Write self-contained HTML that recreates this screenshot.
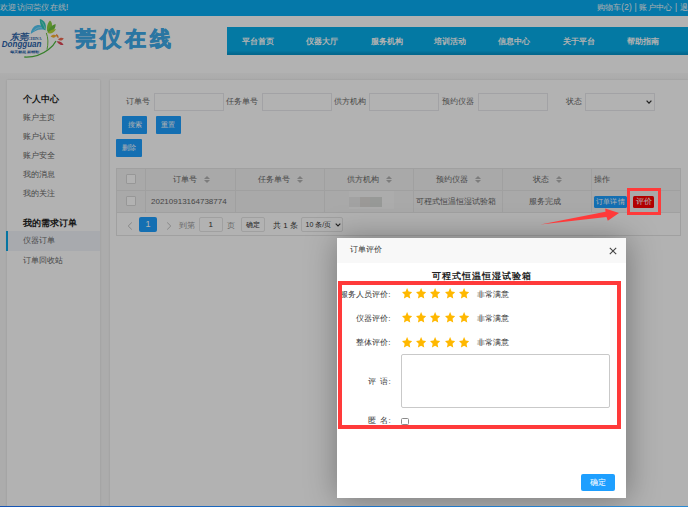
<!DOCTYPE html>
<html><head><meta charset="utf-8">
<style>
*{margin:0;padding:0;box-sizing:border-box}
html,body{width:688px;height:507px;overflow:hidden}
body{position:relative;background:#f6f6f6;font-family:"Liberation Sans",sans-serif;color:#333}
.a{position:absolute;white-space:nowrap}
#topbar{left:0;top:0;width:688px;height:16px;background:#08adf2;color:#f4f8fb;font-size:8.2px;line-height:13px;letter-spacing:.25px}
#header{left:0;top:16px;width:688px;height:57px;background:#fff}
#nav{left:226.5px;top:27.3px;width:462px;height:28px;background:linear-gradient(#06aeea 0,#06aeea 84%,#0596cc 96%,#0596cc 100%)}
.navi{color:#fff;font-size:8px;font-weight:bold;top:8.7px;margin-left:.5px}
#grad{left:0;top:73px;width:688px;height:7px;background:linear-gradient(#f9f9f9,#f6f6f6)}
#side{left:7px;top:80px;width:93px;height:427px;background:#fff;box-shadow:0 0 2px rgba(0,0,0,.12)}
.si{font-size:8px;color:#666;left:16px}
.sh{font-size:9px;color:#222;font-weight:bold;left:16px}
#main{left:110px;top:80px;width:578px;height:427px;background:#fff;box-shadow:0 0 2px rgba(0,0,0,.12)}
.lbl{font-size:8px;color:#666}
.inp{border:1px solid #e8e9ec;background:#fff;height:17.6px}
.btn{background:#1e9fff;color:#fff;font-size:7px;text-align:center;border-radius:1px}
.cb{width:10px;height:10px;border:1px solid #d8d8d8;background:#fff;border-radius:1px}
.th,.td{font-size:8px;color:#666;line-height:10px}
.pg{font-size:8px;color:#666}
.srt{display:inline-block;width:6px;height:8px;vertical-align:middle;margin-left:5px;position:relative;top:0px;background:conic-gradient(from 0deg at 50% 0%,#0000 0)}
.srt:before{content:"";position:absolute;left:0;top:0;border:3px solid transparent;border-top-width:0;border-bottom:3px solid #b2b2b2}
.srt:after{content:"";position:absolute;left:0;top:4.5px;border:3px solid transparent;border-bottom-width:0;border-top:3px solid #b2b2b2}
#overlay{left:0;top:0;width:688px;height:507px;background:rgba(0,0,0,.3)}
.ml{font-size:8px;color:#333;line-height:10px}
#modal{left:337px;top:238px;width:289px;height:260px;background:#fff;box-shadow:1px 1px 30px rgba(0,0,0,.35)}
</style></head><body>
<div class="a" id="topbar"><span class="a" style="left:0px;top:0.6px">欢迎访问莞仪在线!</span><span class="a" style="left:596.5px;top:0.6px">购物车(2) | 账户中心 | 退出</span></div>
<div class="a" id="header">
 <svg class="a" style="left:0;top:-16px" width="70" height="74" viewBox="0 0 70 74">
  <path d="M30.7 34 C31.5 29 33.5 26 37.6 25.1 C40.5 24.6 43.2 26.5 44.8 30 C41.5 29.2 38.5 29.6 35.5 31 C33.5 32 32 33 30.7 34Z" fill="#52c8f5"/>
  <path d="M33.5 31.2 C35.5 28.5 38.5 27.2 42 27.8" stroke="#d8f2fb" stroke-width=".5" fill="none"/>
  <path d="M39.8 19 C42.8 19.8 45.4 22 45.8 25.5 C46 27.5 45.7 29 45.4 30.5 C43 29 40.8 26.5 40.3 24 C40 22.3 39.8 20.5 39.8 19Z" fill="#30c8b8"/>
  <path d="M41.5 21.5 C43 23.5 44.3 26 45 29" stroke="#c8f0ea" stroke-width=".5" fill="none"/>
  <path d="M50 20.6 C52 22 52.6 25 51.5 28 C50.5 30 48.8 31.5 47.2 31.5 C46.6 28.5 47 25.5 48 23.5 C48.6 22.2 49.2 21.3 50 20.6Z" fill="#88d040"/>
  <path d="M55.6 24 C55.8 27 54.5 29.5 52.5 31 C51 32 49 32.5 47.5 32.5 C48.5 29.5 50 27.2 52 25.8 C53.2 25 54.4 24.4 55.6 24Z" fill="#6cc040"/>
  <path d="M56 29 C54.8 31.5 52.8 33 50.5 33.4 C49.5 33.6 48.5 33.4 47.5 33 C49 31.2 51 30 53 29.5 C54 29.2 55 29 56 29Z" fill="#b8d838"/>
  <path d="M46.3 32.9 C48.2 37.5 48.4 44 47 49.5" stroke="#6cc040" stroke-width="1" fill="none"/>
  <path d="M24.3 57 C33 57.5 42 54.5 48.5 49.5 C52 46.8 54.5 44 56 41" stroke="#50b840" stroke-width="1.3" fill="none"/>
  <path d="M50.6 36.5 C52 34.6 54.5 34.2 56.5 35.5 C55.5 37.5 53.5 38.6 50.6 36.5Z" fill="#f8b030"/>
  <path d="M56 34 C57.8 34.2 58.8 35.8 58.5 38.2 C56.8 37.5 55.8 36 56 34Z" fill="#f89040"/>
  <path d="M58 39.5 C59.5 37.6 62 37.2 63.8 38.4 C62.5 40.5 60.2 41.2 58 39.5Z" fill="#f06850"/>
  <path d="M56.8 41.2 C59.5 40.8 62.5 42 63.6 45 C60.8 45.5 58.2 44 56.8 41.2Z" fill="#e04858"/>
  <text x="9.8" y="39.6" font-size="9" font-weight="bold" font-style="italic" fill="#2a62a8" textLength="18" lengthAdjust="spacingAndGlyphs">东莞</text>
  <text x="27.7" y="39.5" font-size="4" font-weight="bold" fill="#2a62a8" font-family="Liberation Serif" textLength="13.8" lengthAdjust="spacingAndGlyphs">CHINA</text>
  <text x="1.8" y="46.8" font-size="9" font-weight="bold" font-style="italic" fill="#2a62a8" textLength="39.7" lengthAdjust="spacingAndGlyphs">Dongguan</text>
  <text x="9.5" y="53" font-size="3.2" font-weight="bold" fill="#2a62a8" textLength="30" lengthAdjust="spacingAndGlyphs">每天都是新精彩</text>
 </svg>
 <span class="a" style="left:74.5px;top:10px;font-size:21px;font-weight:900;color:#3eaae8;letter-spacing:4px;line-height:26px;-webkit-text-stroke:0.7px #3eaae8">莞仪在线</span>
</div>
<div class="a" id="nav">
 <span class="a navi" style="left:15px">平台首页</span>
 <span class="a navi" style="left:79px">仪器大厅</span>
 <span class="a navi" style="left:144px">服务机构</span>
 <span class="a navi" style="left:207px">培训活动</span>
 <span class="a navi" style="left:271px">信息中心</span>
 <span class="a navi" style="left:336px">关于平台</span>
 <span class="a navi" style="left:400px">帮助指南</span>
</div>
<div class="a" id="grad"></div>
<div class="a" id="side">
 <span class="a sh" style="top:12.8px">个人中心</span>
 <span class="a si" style="top:32px">账户主页</span>
 <span class="a si" style="top:51px">账户认证</span>
 <span class="a si" style="top:70px">账户安全</span>
 <span class="a si" style="top:89px">我的消息</span>
 <span class="a si" style="top:108px">我的关注</span>
 <span class="a sh" style="top:136.8px">我的需求订单</span>
 <div class="a" style="left:-1px;top:151px;width:94px;height:19.6px;background:#f1f4fa;border-left:2px solid #0aa8e8"></div>
 <span class="a si" style="top:155px">仪器订单</span>
 <span class="a si" style="top:175px">订单回收站</span>
</div>
<div class="a" id="main">
 <span class="a lbl" style="left:16px;top:16px">订单号</span>
 <div class="a inp" style="left:44px;top:13px;width:70px"></div>
 <span class="a lbl" style="left:116px;top:16px">任务单号</span>
 <div class="a inp" style="left:152px;top:13px;width:70px"></div>
 <span class="a lbl" style="left:224px;top:16px">供方机构</span>
 <div class="a inp" style="left:259px;top:13px;width:70px"></div>
 <span class="a lbl" style="left:332px;top:16px">预约仪器</span>
 <div class="a inp" style="left:368px;top:13px;width:70px"></div>
 <span class="a lbl" style="left:456px;top:16px">状态</span>
 <div class="a inp" style="left:475px;top:13px;width:70px"><svg class="a" style="left:60.2px;top:6.2px" width="6" height="4" viewBox="0 0 6 4"><path d="M.6 .6 L3 3.1 L5.4 .6" stroke="#333" stroke-width="1.3" fill="none"/></svg></div>
 <div class="a btn" style="left:12px;top:36px;width:25px;height:17.5px;line-height:17px">搜索</div>
 <div class="a btn" style="left:45.5px;top:36px;width:25.5px;height:17.5px;line-height:17px">重置</div>
 <div class="a btn" style="left:6px;top:59px;width:26px;height:17.5px;line-height:17px">删除</div>
 <div class="a" id="tbl" style="left:6px;top:88px;width:565px;height:68px;border:1px solid #e6e6e6;border-bottom:1px solid #e6e6e6">
  <div class="a" style="left:0;top:0;width:563px;height:43px;background:#f2f2f2"></div>
  <div class="a" style="left:0;top:21px;width:563px;height:1px;background:#e6e6e6"></div>
  <div class="a" style="left:0;top:43px;width:563px;height:1px;background:#e6e6e6"></div>
  <div class="a" style="left:28px;top:0;width:1px;height:43px;background:#e6e6e6"></div>
  <div class="a" style="left:117.5px;top:0;width:1px;height:43px;background:#e6e6e6"></div>
  <div class="a" style="left:206.5px;top:0;width:1px;height:43px;background:#e6e6e6"></div>
  <div class="a" style="left:295.5px;top:0;width:1px;height:43px;background:#e6e6e6"></div>
  <div class="a" style="left:384.5px;top:0;width:1px;height:43px;background:#e6e6e6"></div>
  <div class="a" style="left:473.8px;top:0;width:1px;height:43px;background:#e6e6e6"></div>
  <div class="a cb" style="left:8.5px;top:5.4px"></div>
  <div class="a cb" style="left:8.5px;top:27.3px"></div>
  <span class="a th" style="left:56px;top:6px">订单号 <i class="srt"></i></span>
  <span class="a th" style="left:141px;top:6px">任务单号 <i class="srt"></i></span>
  <span class="a th" style="left:230px;top:6px">供方机构 <i class="srt"></i></span>
  <span class="a th" style="left:319px;top:6px">预约仪器 <i class="srt"></i></span>
  <span class="a th" style="left:416px;top:6px">状态 <i class="srt"></i></span>
  <span class="a th" style="left:477px;top:6px">操作</span>
  <span class="a td" style="left:34px;top:28px">20210913164738774</span>
  <div class="a" style="left:232px;top:22px;width:45px;height:18px;background:#f6f6f6"></div>
  <div class="a" style="left:231.5px;top:27.5px;width:11px;height:10.3px;background:#e9e9e9"></div>
  <div class="a" style="left:242.5px;top:27.5px;width:10.5px;height:10.3px;background:#dfdcd9"></div>
  <div class="a" style="left:253px;top:27.5px;width:11.5px;height:10.3px;background:#d8dcd9"></div>
  <span class="a td" style="left:299px;top:28px">可程式恒温恒湿试验箱</span>
  <span class="a td" style="left:412px;top:28px">服务完成</span>
  <div class="a" style="left:477px;top:26.5px;width:33px;height:12.3px;background:#1e9fff;color:#fff;font-size:7px;line-height:12.3px;text-align:center;border-radius:1.5px;letter-spacing:.3px">订单详情</div>
  <div class="a" style="left:516px;top:26.5px;width:21px;height:12.5px;background:#f00;color:#fff;font-size:8px;line-height:12.5px;text-align:center;border-radius:1.5px;letter-spacing:.5px;padding-left:1.6px;line-height:12px">评价</div>
  <svg class="a" style="left:9.5px;top:53px" width="6" height="8" viewBox="0 0 6 8"><path d="M4.8 .5 L1.2 4 L4.8 7.5" stroke="#c2c2c2" stroke-width="1" fill="none"/></svg>
  <div class="a" style="left:22px;top:48.1px;width:18px;height:15px;background:#1e9fff;color:#fff;font-size:9px;line-height:15px;text-align:center;border-radius:2px">1</div>
  <svg class="a" style="left:48.5px;top:53px" width="6" height="8" viewBox="0 0 6 8"><path d="M1.2 .5 L4.8 4 L1.2 7.5" stroke="#c2c2c2" stroke-width="1" fill="none"/></svg>
  <span class="a pg" style="left:62px;top:50.8px;color:#999">到第</span>
  <div class="a" style="left:82px;top:48.1px;width:23.5px;height:15px;border:1px solid #e6e6e6;border-radius:2px;font-size:8px;line-height:13px;text-align:center;color:#333">1</div>
  <span class="a pg" style="left:110px;top:50.8px;color:#999">页</span>
  <div class="a" style="left:124px;top:48.1px;width:24px;height:15px;border:1px solid #e6e6e6;border-radius:2px;font-size:7px;line-height:13px;text-align:center;color:#333">确定</div>
  <span class="a pg" style="left:156px;top:50.8px;color:#333">共 1 条</span>
  <div class="a" style="left:184px;top:48.1px;width:42px;height:15px;border:1px solid #e6e6e6;border-radius:2px;font-size:7px;line-height:13px;padding-left:3.5px;color:#333">10 条/页<svg class="a" style="left:32.5px;top:5px" width="6" height="4" viewBox="0 0 6 4"><path d="M.7 .7 L3 3 L5.3 .7" stroke="#333" stroke-width="1.1" fill="none"/></svg></div>
 </div>
</div>
<div class="a" id="overlay"></div>
<div class="a" id="modal">
 <div class="a" style="left:0;top:0;width:289px;height:25px;background:#f8f8f8"></div>
 <span class="a" style="left:12.5px;top:7px;font-size:8px;color:#333;line-height:10px">订单评价</span>
 <svg class="a" style="left:272px;top:9px" width="8" height="8" viewBox="0 0 8 8"><path d="M.8 .8 L7.2 7.2 M7.2 .8 L.8 7.2" stroke="#444" stroke-width="1.1"/></svg>
 <div class="a" style="left:0;width:289px;text-align:center;top:31.7px;font-size:9px;font-weight:bold;color:#222;line-height:12px;letter-spacing:.95px;padding-left:.95px">可程式恒温恒湿试验箱</div>
 <span class="a ml" style="right:235.5px;top:52px">服务人员评价:</span>
 <span class="a ml" style="right:235.5px;top:75.6px">仪器评价:</span>
 <span class="a ml" style="right:235.5px;top:99.5px">整体评价:</span>
 <svg class="a" style="left:64.8px;top:50.2px" width="10.4" height="11" viewBox="0 0 10.4 11"><path d="M5.10 -0.04 L6.60 3.60 L10.24 4.03 L7.53 6.71 L8.27 10.61 L5.10 8.63 L1.93 10.61 L2.67 6.71 L-0.04 4.03 L3.60 3.60Z" fill="#FFB800"/></svg><svg class="a" style="left:79.1px;top:50.2px" width="10.4" height="11" viewBox="0 0 10.4 11"><path d="M5.10 -0.04 L6.60 3.60 L10.24 4.03 L7.53 6.71 L8.27 10.61 L5.10 8.63 L1.93 10.61 L2.67 6.71 L-0.04 4.03 L3.60 3.60Z" fill="#FFB800"/></svg><svg class="a" style="left:93.4px;top:50.2px" width="10.4" height="11" viewBox="0 0 10.4 11"><path d="M5.10 -0.04 L6.60 3.60 L10.24 4.03 L7.53 6.71 L8.27 10.61 L5.10 8.63 L1.93 10.61 L2.67 6.71 L-0.04 4.03 L3.60 3.60Z" fill="#FFB800"/></svg><svg class="a" style="left:107.7px;top:50.2px" width="10.4" height="11" viewBox="0 0 10.4 11"><path d="M5.10 -0.04 L6.60 3.60 L10.24 4.03 L7.53 6.71 L8.27 10.61 L5.10 8.63 L1.93 10.61 L2.67 6.71 L-0.04 4.03 L3.60 3.60Z" fill="#FFB800"/></svg><svg class="a" style="left:122.0px;top:50.2px" width="10.4" height="11" viewBox="0 0 10.4 11"><path d="M5.10 -0.04 L6.60 3.60 L10.24 4.03 L7.53 6.71 L8.27 10.61 L5.10 8.63 L1.93 10.61 L2.67 6.71 L-0.04 4.03 L3.60 3.60Z" fill="#FFB800"/></svg>
 <span class="a ml" style="left:139.5px;top:52px">非常满意</span>
 <svg class="a" style="left:64.8px;top:74.2px" width="10.4" height="11" viewBox="0 0 10.4 11"><path d="M5.10 -0.04 L6.60 3.60 L10.24 4.03 L7.53 6.71 L8.27 10.61 L5.10 8.63 L1.93 10.61 L2.67 6.71 L-0.04 4.03 L3.60 3.60Z" fill="#FFB800"/></svg><svg class="a" style="left:79.1px;top:74.2px" width="10.4" height="11" viewBox="0 0 10.4 11"><path d="M5.10 -0.04 L6.60 3.60 L10.24 4.03 L7.53 6.71 L8.27 10.61 L5.10 8.63 L1.93 10.61 L2.67 6.71 L-0.04 4.03 L3.60 3.60Z" fill="#FFB800"/></svg><svg class="a" style="left:93.4px;top:74.2px" width="10.4" height="11" viewBox="0 0 10.4 11"><path d="M5.10 -0.04 L6.60 3.60 L10.24 4.03 L7.53 6.71 L8.27 10.61 L5.10 8.63 L1.93 10.61 L2.67 6.71 L-0.04 4.03 L3.60 3.60Z" fill="#FFB800"/></svg><svg class="a" style="left:107.7px;top:74.2px" width="10.4" height="11" viewBox="0 0 10.4 11"><path d="M5.10 -0.04 L6.60 3.60 L10.24 4.03 L7.53 6.71 L8.27 10.61 L5.10 8.63 L1.93 10.61 L2.67 6.71 L-0.04 4.03 L3.60 3.60Z" fill="#FFB800"/></svg><svg class="a" style="left:122.0px;top:74.2px" width="10.4" height="11" viewBox="0 0 10.4 11"><path d="M5.10 -0.04 L6.60 3.60 L10.24 4.03 L7.53 6.71 L8.27 10.61 L5.10 8.63 L1.93 10.61 L2.67 6.71 L-0.04 4.03 L3.60 3.60Z" fill="#FFB800"/></svg>
 <span class="a ml" style="left:139.5px;top:75.6px">非常满意</span>
 <svg class="a" style="left:64.8px;top:98.7px" width="10.4" height="11" viewBox="0 0 10.4 11"><path d="M5.10 -0.04 L6.60 3.60 L10.24 4.03 L7.53 6.71 L8.27 10.61 L5.10 8.63 L1.93 10.61 L2.67 6.71 L-0.04 4.03 L3.60 3.60Z" fill="#FFB800"/></svg><svg class="a" style="left:79.1px;top:98.7px" width="10.4" height="11" viewBox="0 0 10.4 11"><path d="M5.10 -0.04 L6.60 3.60 L10.24 4.03 L7.53 6.71 L8.27 10.61 L5.10 8.63 L1.93 10.61 L2.67 6.71 L-0.04 4.03 L3.60 3.60Z" fill="#FFB800"/></svg><svg class="a" style="left:93.4px;top:98.7px" width="10.4" height="11" viewBox="0 0 10.4 11"><path d="M5.10 -0.04 L6.60 3.60 L10.24 4.03 L7.53 6.71 L8.27 10.61 L5.10 8.63 L1.93 10.61 L2.67 6.71 L-0.04 4.03 L3.60 3.60Z" fill="#FFB800"/></svg><svg class="a" style="left:107.7px;top:98.7px" width="10.4" height="11" viewBox="0 0 10.4 11"><path d="M5.10 -0.04 L6.60 3.60 L10.24 4.03 L7.53 6.71 L8.27 10.61 L5.10 8.63 L1.93 10.61 L2.67 6.71 L-0.04 4.03 L3.60 3.60Z" fill="#FFB800"/></svg><svg class="a" style="left:122.0px;top:98.7px" width="10.4" height="11" viewBox="0 0 10.4 11"><path d="M5.10 -0.04 L6.60 3.60 L10.24 4.03 L7.53 6.71 L8.27 10.61 L5.10 8.63 L1.93 10.61 L2.67 6.71 L-0.04 4.03 L3.60 3.60Z" fill="#FFB800"/></svg>
 <span class="a ml" style="left:139.5px;top:99.5px">非常满意</span>
 <span class="a ml" style="left:31.4px;top:139px;letter-spacing:0.6px">评 语:</span>
 <div class="a" style="left:64.3px;top:116px;width:209px;height:54px;border:1px solid #c9c9c9;border-radius:2px"></div>
 <span class="a ml" style="left:31.4px;top:178px;letter-spacing:0.6px">匿 名:</span>
 <div class="a" style="left:64.3px;top:179.5px;width:7.7px;height:7.5px;border:1px solid #8a8a8a;border-radius:1.5px"></div>
 <div class="a" style="left:243.8px;top:236px;width:34px;height:17px;background:#1e9fff;border-radius:2px;color:#fff;font-size:8px;line-height:17px;text-align:center">确定</div>
</div>
<div class="a" style="left:338px;top:280.7px;width:283px;height:148px;border:4px solid #ff3a3a"></div>
<div class="a" style="left:627.3px;top:188px;width:34.1px;height:26.7px;border:3.8px solid #ff3a3a"></div>
<svg class="a" style="left:0;top:0" width="688" height="507"><path d="M540.5 224.6 L605.5 211.8 L605.2 208.6 L619 213 L607.8 220.8 L606.5 216.9 Z" fill="#ff3a3a"/></svg>
<div class="a" style="left:0;top:506px;width:688px;height:1px;background:linear-gradient(90deg,#1552b2 0,#1a5cb8 60px,#1a6cc0 300px,#2a8ad4 100%)"></div>
</body></html>
